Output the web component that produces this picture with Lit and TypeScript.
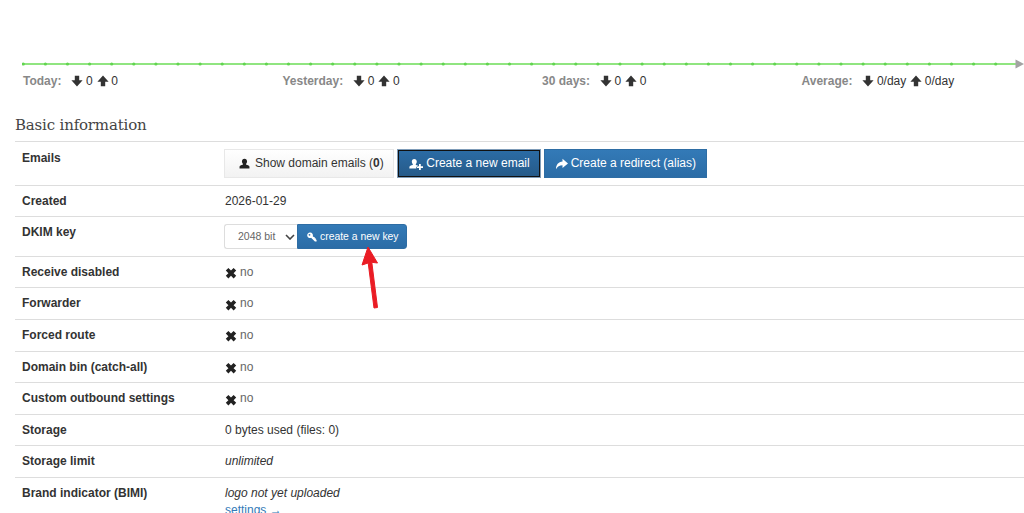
import { LitElement, html, css, svg } from "lit";
import { customElement } from "lit/decorators.js";

const ic = (d: string, w = 12, h = 12, vw = 12) => html`<svg class="ic" width=${w} height=${h} viewBox="0 0 ${vw} 12" aria-hidden="true"><path d=${d} fill="currentColor" fill-rule="evenodd"></path></svg>`;
const DOWN = "M3.800 .8h4.400v4.400H11.600L6 11.400 .4 5.200H3.800z";
const UP = "M3.800 11.200h4.400V6.800H11.600L6 .6 .4 6.800H3.800z";
const X = "M3.400 1 6 3.600 8.600 1 11.200 3.600 8.600 6.200 11.200 8.800 8.600 11.400 6 8.800 3.400 11.400 .8 8.800 3.400 6.200 .8 3.600z";
const USER = "M6 .8c1.800 0 2.800 1.300 2.800 3 0 1-.4 2-1 2.600v.9c1.900.4 3.600 1 3.600 2.200v1.900H.6V9.500c0-1.200 1.700-1.800 3.600-2.200v-.9c-.6-.6-1-1.600-1-2.600 0-1.700 1-3 2.800-3z";
const USERADD = "M5.200 1c1.600 0 2.600 1.200 2.600 2.800 0 1-.4 1.800-1 2.400v.9c.7.1 1.400.3 2 .5v1.200H7.300v1.700H.4V9.200c0-1.100 1.600-1.700 3.400-2.100v-.9c-.6-.6-1-1.400-1-2.400C2.800 2.200 3.700 1 5.200 1zM10 6h1.800v2.300H14v1.700h-2.200v2H10V10H8V8.300h2z";
const SHARE = "M7.500 .8 13 5.400 7.500 10V7.200C4.500 7.200 2.400 8.300 1 11.200 1 6.800 3.400 3.900 7.500 3.500z";
const KEY = "M3.800 .6a3.300 3.300 0 0 1 3.100 4.400l1.100 1.100h1.200v1.300h1.300v1.300l1 .9v1.800h-2L4.900 6.900A3.300 3.300 0 1 1 3.800 .6zM3 2.300a1.100 1.100 0 1 0 0 2.200 1.100 1.100 0 0 0 0-2.200z";

const Pair = (d: string, v: string) => html`<span class="val">${ic(DOWN)}${d}</span><span class="val">${ic(UP)}${v}</span>`;

@customElement("app-root")
export class AppRoot extends LitElement {
  static styles = css`
    :host { display: block; height: 513px; overflow: hidden; background: #fff; color: #333; font: 12px/17px "Liberation Sans", Arial, sans-serif; position: relative; }
    * { box-sizing: border-box; }
    .chart { display: block; margin: 58px 0 0 22px; width: 1002px; height: 12px; }
    .stats { display: grid; grid-template-columns: repeat(4, 259.500px); margin: 1px 0 0 23px; height: 20px; align-items: center; }
    .stat { display: flex; align-items: center; white-space: nowrap; }
    .stat b { color: #888; margin-right: 10px; }
    .val { display: inline-flex; align-items: center; margin-right: 4px; }
    .ic { flex: none; }
    .val .ic { margin-right: 2.500px; }
    h2 { font: 400 15px/20px "DejaVu Serif", "Liberation Serif", serif; color: #444; margin: 24px 0 6px 15px; letter-spacing: -.18px; }
    .tbl { margin-left: 15px; }
    .row { display: grid; grid-template-columns: 203px 1fr; border-top: 1px solid #ddd; padding: 7px 7px 6.600px; min-height: 31.600px; }
    .row b { color: #333; }
    .row b.first { padding-top: 1px; }
    .no { display: flex; align-items: center; color: #666; }
    .no .ic { margin: 2px 3px 0 0; color: #222; }
    em { font-style: italic; }
    a { color: #337ab7; text-decoration: none; display: block; }
    .btns { display: flex; gap: 3.500px; margin-left: -1px; }
    .btn { display: inline-flex; align-items: center; gap: 2px; height: 29px; padding: 0 10px 0 10px; border: 1px solid #2e6da4; color: #fff; background: linear-gradient(#337ab7, #2b6ca6); font: inherit; white-space: nowrap; }
    .btn.def { color: #333; background: linear-gradient(#fff, #f2f2f2); border-color: #e8e8e8; gap: 5px; padding: 0 9px 0 14px; }
    .btn.def .ic { color: #222; }
    .btn.focus { background: linear-gradient(#2b6ca6, #265a88); border-color: #7f9cb8; box-shadow: inset 0 0 0 1px #111; gap: 3px; padding: 0 10px 0 11px; }
    .btn.fwd { padding: 0 9.500px; }
    .key { display: flex; margin-left: -1px; }
    .sel { width: 73px; height: 25px; border: 1px solid #ddd; border-right: 0; border-radius: 3px 0 0 3px; display: flex; align-items: center; justify-content: space-between; padding: 0 2px 0 13px; font-size: 10.500px; color: #666; background: #fff; }
    .sel svg { display: block; }
    .kbtn { height: 25px; width: 110px; padding: 0 9px; gap: 3px; font-size: 10.400px; border-radius: 0 3px 3px 0; }
    .pointer { position: absolute; left: 355px; top: 242px; }
  `;

  no() {
    return html`<span class="no">${ic(X)}no</span>`;
  }

  render() {
    const dots = Array.from({ length: 45 }, (_, i) => 1.300 + i * 22.100);
    return html`
      <svg class="chart" viewBox="0 0 1002 12" aria-hidden="true">
        <line x1="0" y1="6" x2="994" y2="6" stroke="#90e580" stroke-width="1.800"></line>
        ${dots.map((x) => svg`<circle cx=${x} cy="6" r="1.600" fill="#62d450"></circle>`)}
        <path d="M993.500 1.500 1002 6 993.500 10.500z" fill="#a3a3a3"></path>
      </svg>
      <div class="stats">
        <div class="stat"><b>Today:</b>${Pair("0", "0")}</div>
        <div class="stat"><b>Yesterday:</b>${Pair("0", "0")}</div>
        <div class="stat"><b>30 days:</b>${Pair("0", "0")}</div>
        <div class="stat"><b>Average:</b>${Pair("0/day", "0/day")}</div>
      </div>
      <h2>Basic information</h2>
      <div class="tbl">
        <div class="row">
          <b class="first">Emails</b>
          <div class="btns">
            <span class="btn def">${ic(USER, 11, 11)}<span>Show domain emails (<b>0</b>)</span></span>
            <span class="btn focus">${ic(USERADD, 14, 12, 14)}Create a new email</span>
            <span class="btn fwd">${ic(SHARE, 14, 12, 14)}Create a redirect (alias)</span>
          </div>
        </div>
        <div class="row"><b>Created</b><span>2026-01-29</span></div>
        <div class="row">
          <b>DKIM key</b>
          <div class="key">
            <span class="sel">2048 bit<svg width="10" height="6" viewBox="0 0 10 6"><path d="M1 1l4 4 4-4" fill="none" stroke="#444" stroke-width="1.600"></path></svg></span>
            <span class="btn kbtn">${ic(KEY, 10, 10)}create a new key</span>
          </div>
        </div>
        <div class="row"><b>Receive disabled</b>${this.no()}</div>
        <div class="row"><b>Forwarder</b>${this.no()}</div>
        <div class="row"><b>Forced route</b>${this.no()}</div>
        <div class="row"><b>Domain bin (catch-all)</b>${this.no()}</div>
        <div class="row"><b>Custom outbound settings</b>${this.no()}</div>
        <div class="row"><b>Storage</b><span>0 bytes used (files: 0)</span></div>
        <div class="row"><b>Storage limit</b><em>unlimited</em></div>
        <div class="row"><b>Brand indicator (BIMI)</b><div><em>logo not yet uploaded</em><a href="#">settings →</a></div></div>
      </div>
      <svg class="pointer" width="30" height="70" viewBox="0 0 30 70" aria-hidden="true">
        <path d="M13 5 22.500 21 16.800 20.300 22.500 65.500 19 66 13.200 21 7 23z" fill="#ea1c24" stroke="#ea1c24" stroke-width="1" stroke-linejoin="round"></path>
      </svg>
    `;
  }
}
